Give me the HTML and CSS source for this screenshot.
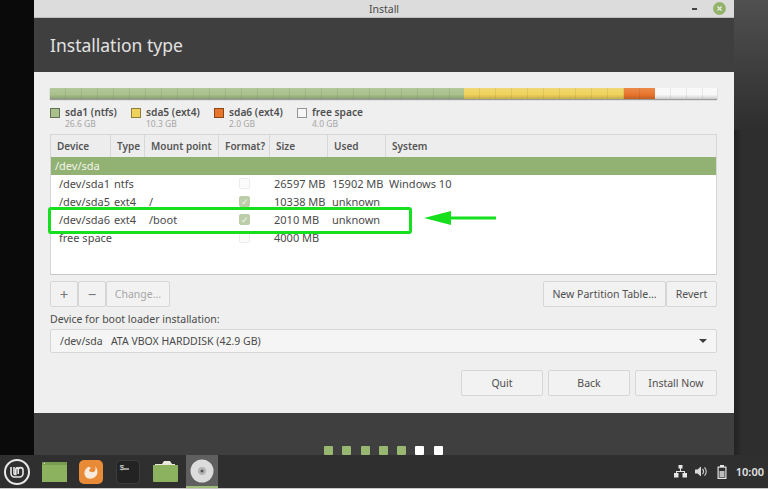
FILE: index.html
```html
<!DOCTYPE html>
<html>
<head>
    <title>Install</title>
    <link rel="stylesheet" href="styles.css">
</head>
<body>
    <div class="desktop">
        <div class="window">
            <div class="titleBar">
                <span class="titleText">Install</span>
                <span class="minButton"></span>
                <span class="closeButton">
                    <svg width="13" height="13" viewBox="0 0 13 13"><path d="M4.500 4.500l4 4M8.500 4.500l-4 4" stroke="#e8eedd" stroke-width="1.300" fill="none"/></svg>
                </span>
            </div>
            <div class="headerBand">Installation type</div>
            <div class="content">
                <div class="partBar">
                    <div class="partSeg segGreen"></div>
                    <div class="partSeg segYellow"></div>
                    <div class="partSeg segOrange"></div>
                    <div class="partSeg segFree"></div>
                </div>
                <div class="legend">
                    <div class="legendItem legendOne"><span class="swatch segGreen"></span><div><div class="legendName">sda1 (ntfs)</div><div class="legendSize">26.6 GB</div></div></div>
                    <div class="legendItem legendTwo"><span class="swatch segYellow"></span><div><div class="legendName">sda5 (ext4)</div><div class="legendSize">10.3 GB</div></div></div>
                    <div class="legendItem legendThree"><span class="swatch segOrange"></span><div><div class="legendName">sda6 (ext4)</div><div class="legendSize">2.0 GB</div></div></div>
                    <div class="legendItem"><span class="swatch segFree"></span><div><div class="legendName">free space</div><div class="legendSize">4.0 GB</div></div></div>
                </div>
                <div class="tableBox">
                    <div class="tableRow headRow">
                        <span class="colDevice">Device</span><span class="colType">Type</span><span class="colMount">Mount point</span><span class="colFormat">Format?</span><span class="colSize">Size</span><span class="colUsed">Used</span><span class="colSystem">System</span>
                    </div>
                    <div class="diskRow">/dev/sda</div>
                    <div class="tableRow bodyRow">
                        <span class="colDevice">/dev/sda1</span><span class="colType">ntfs</span><span class="colMount"></span><span class="colFormat"><i class="check"></i></span><span class="colSize">26597 MB</span><span class="colUsed">15902 MB</span><span class="colSystem">Windows 10</span>
                    </div>
                    <div class="tableRow bodyRow">
                        <span class="colDevice">/dev/sda5</span><span class="colType">ext4</span><span class="colMount">/</span><span class="colFormat"><i class="check checked">&#10003;</i></span><span class="colSize">10338 MB</span><span class="colUsed">unknown</span><span class="colSystem"></span>
                    </div>
                    <div class="tableRow bodyRow">
                        <span class="colDevice">/dev/sda6</span><span class="colType">ext4</span><span class="colMount">/boot</span><span class="colFormat"><i class="check checked">&#10003;</i></span><span class="colSize">2010 MB</span><span class="colUsed">unknown</span><span class="colSystem"></span>
                    </div>
                    <div class="tableRow bodyRow">
                        <span class="colDevice">free space</span><span class="colType"></span><span class="colMount"></span><span class="colFormat"><i class="check"></i></span><span class="colSize">4000 MB</span><span class="colUsed"></span><span class="colSystem"></span>
                    </div>
                </div>
                <div class="toolRow">
                    <div class="btnGroup">
                        <span class="btn btnIcon">+</span><span class="btn btnIcon">&minus;</span><span class="btn btnChange">Change...</span>
                    </div>
                    <div class="btnGroup">
                        <span class="btn btnTable">New Partition Table...</span><span class="btn btnRevert">Revert</span>
                    </div>
                </div>
                <div class="bootLabel">Device for boot loader installation:</div>
                <div class="combo">
                    <span class="comboText">/dev/sda&nbsp;&nbsp;&nbsp;ATA VBOX HARDDISK (42.9 GB)</span>
                    <span class="comboArrow"></span>
                </div>
                <div class="actionRow">
                    <span class="btn btnAction">Quit</span>
                    <span class="btn btnAction">Back</span>
                    <span class="btn btnAction">Install Now</span>
                </div>
            </div>
            <div class="footerBand">
                <i class="dot dotDone"></i><i class="dot dotDone"></i><i class="dot dotDone"></i><i class="dot dotDone"></i><i class="dot dotDone"></i><i class="dot"></i><i class="dot"></i>
            </div>
        </div>

        <!-- annotation drawn over the screenshot -->
        <div class="highlightBox"></div>
        <svg class="arrowMark" width="72" height="14" viewBox="0 0 72 14">
            <path d="M0 7L27 0V5.500H72V8.500H27V14Z" fill="#16e01e"/>
        </svg>
    </div>

    <div class="taskbar">
        <div class="launchers">
            <span class="launcher">
                <svg width="28" height="28" viewBox="0 0 28 28"><circle cx="14" cy="14" r="12" fill="none" stroke="#e8e8e8" stroke-width="2"/><path d="M8 9v6.500a3.500 3.500 0 0 0 3.500 3.500h5a3.500 3.500 0 0 0 3.500-3.500V12a2.400 2.400 0 0 0-4.800 0v4M11 9v6.500a1 1 0 0 0 1 1h.800V12a2.400 2.400 0 0 1 2.400-2.400" fill="none" stroke="#e8e8e8" stroke-width="1.600"/></svg>
            </span>
            <span class="launcher">
                <svg width="25" height="20" viewBox="0 0 25 20"><rect width="25" height="20" fill="#8db25f"/><rect width="25" height="3" fill="#7a9c50"/><rect x="2" y="1" width="1" height="1" fill="#e6efd6"/></svg>
            </span>
            <span class="launcher">
                <svg width="24" height="24" viewBox="0 0 24 24"><rect width="24" height="24" rx="5" fill="#e98a36"/><path d="M9 6.500c1 .8 2 1 3 1l-2 3c1 2 4 2 5.500 1 1-1 1.500-3 .5-5.500 3 3 3.500 8 .5 10.500-3 3-8 3-10 0-2-3-1-7 2.500-9.500z" fill="#f8ebdc"/></svg>
            </span>
            <span class="launcher">
                <svg width="24" height="24" viewBox="0 0 24 24"><rect x="0.500" y="0.500" width="23" height="23" rx="4" fill="#232323" stroke="#3c3c3c"/><text x="3.500" y="9.500" font-size="8" font-family="Liberation Mono, monospace" fill="#e6e6e6">$</text><path d="M8 9h5" stroke="#e6e6e6" stroke-width="1.200" fill="none"/></svg>
            </span>
            <span class="launcher">
                <svg width="25" height="21" viewBox="0 0 25 21"><path d="M2 3h7l2-3h6l2 3h3v2H2z" fill="#ece9dc"/><path d="M0 4h25v16a1 1 0 0 1-1 1H1a1 1 0 0 1-1-1z" fill="#8db25f"/></svg>
            </span>
            <span class="launcher launcherActive">
                <svg width="24" height="24" viewBox="0 0 24 24"><circle cx="12" cy="12" r="11.500" fill="#dcdcdc"/><circle cx="12" cy="12" r="4" fill="#b4b4b4"/><circle cx="12" cy="12" r="1.500" fill="#555"/></svg>
            </span>
        </div>
        <div class="tray">
            <svg width="13" height="13" viewBox="0 0 13 13"><path d="M4.500 0h4v3.500h-4zM6 3.500h1V6H6zM2 6h9v1H2zM2 6h1v2H2zM10 6h1v2h-1zM0 8h4.500v4.500H0zM8.500 8H13v4.500H8.500z" fill="#e6e6e6"/></svg>
            <svg class="traySound" width="12" height="13" viewBox="0 0 12 13"><path d="M0 4.500h2.500L6 1.500v10L2.500 8.500H0z" fill="#d8d8d8"/><path d="M7.500 4a3.500 3.500 0 0 1 0 5M9.500 2.300a6 6 0 0 1 0 8.400" fill="none" stroke="#d8d8d8" stroke-width="1.100"/></svg>
            <svg class="trayBattery" width="10" height="14" viewBox="0 0 10 14"><path d="M3 0h4v1.500h2.500v12.500h-9V1.500H3z" fill="#e6e6e6"/><rect x="1.700" y="2.700" width="6.600" height="10" fill="#2f2f2f"/><rect x="2.500" y="6" width="5" height="6" fill="#bdbdbd"/></svg>
            <span class="clock">10:00</span>
        </div>
    </div>
    <div class="screenEdge"></div>
</body>
</html>
```

FILE: styles.css
```css
*
{
    box-sizing: border-box;
}
html, body
{
    margin: 0;
    height: 489px;
    overflow: hidden;
    background: #2f2f2f;
    font-family: "Noto Sans", sans-serif;
    font-size: 11px;
    color: #4a4a4a;
}

/* desktop and window */
.desktop
{
    position: relative;
    height: 455px;
    padding-left: 34px;
    background:
        linear-gradient(to right, #222 0, #2e2e2e 8px) right top / 34px 100% no-repeat,
        #0a0a0a;
}
.desktop::before
{
    content: "";
    position: absolute;
    right: 0;
    top: 0;
    width: 34px;
    height: 130px;
    background: linear-gradient(to bottom, #505050, #2e2e2e);
}
.window
{
    position: relative;
    width: 700px;
    height: 455px;
    display: flex;
    flex-direction: column;
}
.titleBar
{
    position: relative;
    height: 18px;
    flex: none;
    background: #dcdcdc;
    border-bottom: 1px solid #bdbdbd;
    text-align: center;
    line-height: 19px;
    font-size: 10.500px;
}
.minButton
{
    position: absolute;
    left: 658px;
    top: 8px;
    width: 5px;
    height: 2px;
    background: #444;
}
.closeButton
{
    position: absolute;
    left: 679px;
    top: 2px;
    width: 13px;
    height: 13px;
    border-radius: 50%;
    background: #93b36b;
    display: flex;
}
.headerBand
{
    height: 54px;
    flex: none;
    background: #3f3f3f;
    color: #e2e2e2;
    font-size: 17.500px;
    line-height: 54px;
    padding-left: 16px;
}
.content
{
    flex: 1;
    background: #efefef;
    padding: 16px 17px 0 16px;
}
.footerBand
{
    height: 42px;
    flex: none;
    background: #3f3f3f;
    display: flex;
    align-items: flex-end;
    gap: 9.300px;
    padding-left: 290px;
}

/* partition bar */
.partBar
{
    display: flex;
    height: 11px;
    box-shadow: 0 1px 1px #9a9a9a;
}
.partSeg
{
    height: 100%;
    background-image: repeating-linear-gradient(to right, transparent 0, transparent 15px, rgba(0,0,0,0.07) 15px, rgba(0,0,0,0.07) 16px), linear-gradient(to bottom, rgba(255,255,255,0.15) 0, rgba(255,255,255,0) 60%, rgba(0,0,0,0.18) 100%);
}
.partBar .segGreen { width: 414px; }
.partBar .segYellow { width: 160px; }
.partBar .segOrange { width: 31px; }
.partBar .segFree { width: 62px; border: 0; background-color: #f8f8f8; }
.segGreen { background-color: #a8c08b; }
.segYellow { background-color: #efd25c; }
.segOrange { background-color: #e8752c; }
.segFree { background-color: #f6f6f6; }

/* legend */
.legend
{
    display: flex;
    margin-top: 8px;
    height: 27px;
}
.legendItem
{
    display: flex;
    gap: 5px;
}
.legendOne { width: 81px; }
.legendTwo { width: 83px; }
.legendThree { width: 83px; }
.swatch
{
    width: 10px;
    height: 10px;
    margin-top: 1px;
    border: 1px solid rgba(0,0,0,0.4);
    flex: none;
}
.legendName
{
    font-size: 10.200px;
    line-height: 11px;
    font-weight: 600;
    color: #4f4f4f;
    white-space: nowrap;
}
.legendSize
{
    font-size: 8.500px;
    line-height: 11px;
    color: #a5a5a5;
}

/* table */
.tableBox
{
    height: 141px;
    background: #ffffff;
    border: 1px solid #d6d6d6;
    border-bottom-color: #c8c8c8;
    overflow: hidden;
}
.tableRow
{
    display: flex;
    white-space: nowrap;
}
.tableRow span
{
    flex: none;
    padding-left: 6px;
}
.colDevice { width: 60px; }
.colType { width: 34px; }
.colMount { width: 74px; }
.colFormat { width: 51px; }
.colSize { width: 58px; }
.colUsed { width: 58px; }
.colSystem { width: 300px; }
.headRow
{
    height: 22px;
    background: #ededed;
    line-height: 22px;
    font-size: 10px;
    font-weight: 600;
    color: #555;
}
.headRow span
{
    border-right: 1px solid #d8d8d8;
}
.headRow .colSystem
{
    border-right: 0;
}
.diskRow
{
    height: 18px;
    line-height: 18px;
    background: #92b273;
    color: #f2f5ec;
    padding-left: 4px;
}
.bodyRow
{
    height: 18px;
    line-height: 18px;
}
.bodyRow .colDevice
{
    padding-left: 8px;
}
.bodyRow .colType
{
    padding-left: 3px;
}
.bodyRow .colMount
{
    padding-left: 4px;
}
.bodyRow .colSize,
.bodyRow .colUsed
{
    padding-left: 4px;
}
.bodyRow .colSystem
{
    padding-left: 3px;
}
.bodyRow .colFormat
{
    padding-left: 20px;
}
.check
{
    display: block;
    width: 11px;
    height: 11px;
    margin-top: 3px;
    border: 1px solid #ececec;
    border-radius: 2px;
    background: #fbfbfb;
    font-style: normal;
    font-size: 9px;
    line-height: 9px;
    text-align: center;
    color: #f4f7ee;
}
.checked
{
    background: #bccdaa;
    border-color: #bccdaa;
}

/* buttons */
.toolRow
{
    display: flex;
    justify-content: space-between;
    margin-top: 6px;
}
.btnGroup
{
    display: flex;
}
.btn
{
    display: block;
    height: 26px;
    line-height: 24px;
    font-size: 10.500px;
    text-align: center;
    border: 1px solid #d6d6d6;
    border-radius: 2px;
    background: #f2f2f2;
    color: #4f4f4f;
    white-space: nowrap;
}
.btn.btnIcon
{
    width: 28px;
    font-size: 15px;
    color: #777;
}
.btnChange
{
    width: 64px;
    color: #a6a6a6;
}
.btnTable
{
    width: 123px;
}
.btnRevert
{
    width: 51px;
}
.bootLabel
{
    margin-top: 5px;
    font-size: 10.500px;
    line-height: 15px;
    height: 16px;
}
.combo
{
    display: flex;
    justify-content: space-between;
    align-items: center;
    height: 24px;
    margin-top: 1px;
    padding: 0 9px;
    font-size: 10.500px;
    border: 1px solid #d6d6d6;
    border-radius: 2px;
    background: #f5f5f5;
}
.comboArrow
{
    border-left: 4px solid transparent;
    border-right: 4px solid transparent;
    border-top: 4px solid #3c3c3c;
}
.actionRow
{
    display: flex;
    justify-content: flex-end;
    gap: 5px;
    margin-top: 17px;
}
.btnAction
{
    width: 82px;
}

/* step dots */
.dot
{
    display: block;
    width: 9px;
    height: 9px;
    border-radius: 1px;
    background: #ffffff;
}
.dotDone
{
    background: #98b871;
}

/* annotation */
.highlightBox
{
    position: absolute;
    left: 48px;
    top: 207px;
    width: 364px;
    height: 27px;
    border: 3px solid #16e01e;
    border-radius: 3px;
}
.arrowMark
{
    position: absolute;
    left: 424px;
    top: 211px;
}

/* panel */
.taskbar
{
    display: flex;
    justify-content: space-between;
    align-items: center;
    height: 33px;
    background: #2f2f2f;
}
.launchers
{
    display: flex;
    align-items: center;
    margin-left: -1px;
}
.launcher
{
    display: flex;
    justify-content: center;
    align-items: center;
    width: 36px;
    height: 33px;
    margin-right: 1px;
}
.launcherActive
{
    width: 32px;
    margin-left: 2px;
    background: #5f5f5f;
    border-bottom: 2px solid #9dbb78;
}
.tray
{
    display: flex;
    align-items: center;
    padding-right: 4px;
    color: #e2e2e2;
}
.traySound
{
    margin-left: 8px;
}
.trayBattery
{
    margin-left: 10px;
}
.clock
{
    font-weight: 600;
    font-size: 11px;
    margin-left: 9px;
}
.screenEdge
{
    height: 1px;
    background: #c9c9c9;
}
```
